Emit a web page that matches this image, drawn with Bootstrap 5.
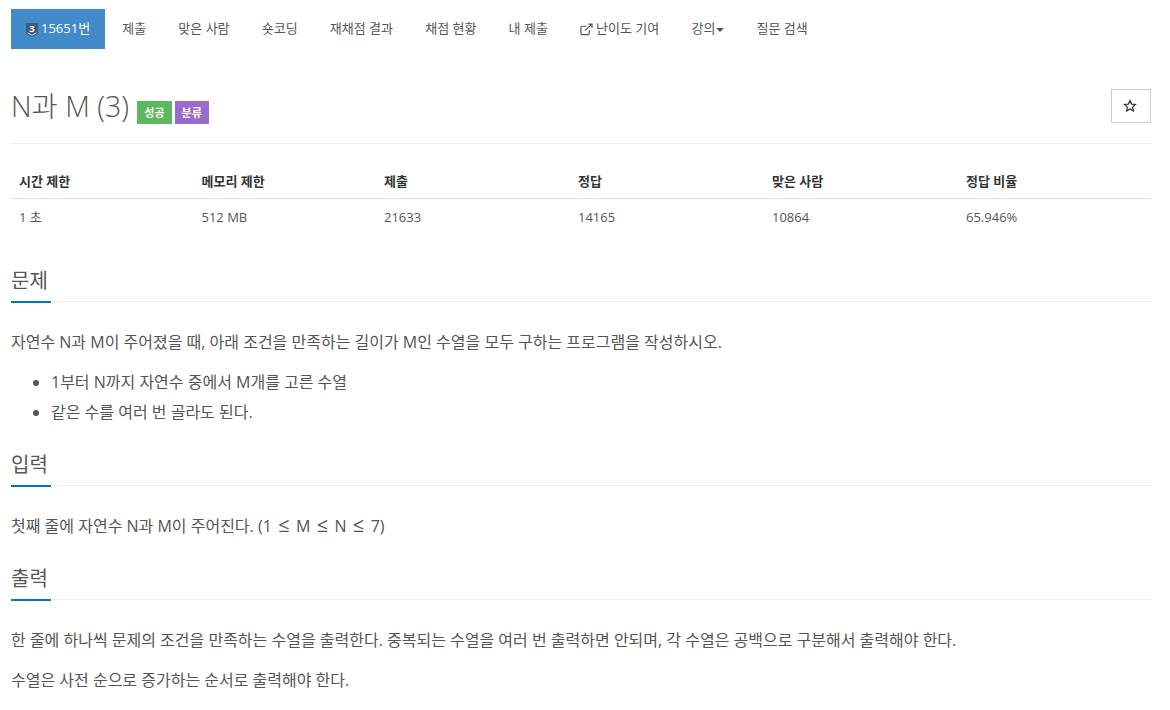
<!DOCTYPE html>
<html lang="ko">
<head>
  <meta charset="UTF-8">
  <meta name="viewport" content="width=device-width, initial-scale=1">
  <title>15651번: N과 M (3)</title>
  <link href="https://cdn.jsdelivr.net/npm/bootstrap@5.3.3/dist/css/bootstrap.min.css" rel="stylesheet">
  <style>
    body { font-family: "Open Sans", "Noto Sans CJK KR", sans-serif; color: #555; font-size: 16px; overflow: hidden; }
    .page-wrap { padding: 9px 19px 0 11px; }
    .tab-bar { height: 40px; }
    .tab-item { display: flex; align-items: center; height: 40px; padding: 0 16.1px; font-size: 13px; color: #555; text-decoration: none; white-space: nowrap; }
    .tab-item.tab-active { background: #428bca; color: #fff; padding: 0 15px; margin-right: 1px; }
    .tab-icon { margin-right: 3px; }
    .tier-icon { margin-top: 2px; }
    .tab-caret { display: inline-block; border-top: 4px solid #555; border-left: 4px solid transparent; border-right: 4px solid transparent; margin-left: 1px; margin-top: 2px; }
    .title-row { height: 95px; border-bottom: 1px solid #eee; }
    .title-text { font-size: 28.500px; font-weight: 300; color: #555; margin: 0; padding-top: 38px; line-height: 38px; }
    .tag { display: inline-block; font-size: 11px; font-weight: 700; color: #fff; height: 23px; line-height: 23px; padding: 0 7px; vertical-align: 0; }
    .tag-green { background: #5cb85c; margin-left: 1px; }
    .tag-purple { background: #9b6bcc; margin-left: 3px; }
    .star-btn { width: 40px; height: 34px; margin-top: 40px; border: 1px solid #ccc; background: #fff; display: flex; align-items: center; justify-content: center; padding: 0 2px 0 0; }
    .stat-table { margin: 18px 0 22px; font-size: 13px; line-height: 19px; table-layout: fixed; }
    .stat-col-a { width: 182.500px; }
    .stat-col-b { width: 194px; }
    .stat-table th { color: #333; border-bottom: 1px solid #ddd; padding: 9px 8px 7px; height: 36px; font-weight: 700; }
    .stat-table td { color: #555; padding: 9px 8px 8px; border: 0; height: 38px; }
    .sect-head { position: relative; border-bottom: 1px dotted #e0e0e0; height: 44px; }
    .sect-head h2 { font-size: 20px; font-weight: 400; color: #555; margin: 0; line-height: 45px; display: inline-block; }
    .sect-head::after { content: ""; position: absolute; left: 0; bottom: -2px; width: 40px; height: 2px; background: #0076c0; }
    .sect-gap { margin-top: 15px; }
    .sect-text { font-size: 16px; margin: 0 0 10px; line-height: 30px; }
    .sect-first { margin-top: 25px; }
    .sect-list { margin: 0; padding-left: 40px; font-size: 16px; line-height: 30px; }
    .math-op { font-size: 20px; line-height: 1; margin: 0 2.200px; }
  </style>
</head>
<body>
  <div class="page-wrap">
    <nav class="tab-bar d-flex">
      <a class="tab-item tab-active" href="#">
        <svg width="12" height="14" viewBox="0 0 12 14" class="tab-icon tier-icon"><path d="M0 0h12v10.500l-6 3.500-6-3.500z" fill="#3f5a78"/><path d="M1.500 9.800l4.500 2.400 4.500-2.400" fill="none" stroke="#dfe7ef" stroke-width="1"/><text x="6" y="8.500" font-size="9.500" font-weight="700" fill="#fff" text-anchor="middle" font-family="Open Sans, sans-serif">3</text></svg>15651번</a>
      <a class="tab-item" href="#">제출</a>
      <a class="tab-item" href="#">맞은 사람</a>
      <a class="tab-item" href="#">숏코딩</a>
      <a class="tab-item" href="#">재채점 결과</a>
      <a class="tab-item" href="#">채점 현황</a>
      <a class="tab-item" href="#">내 제출</a>
      <a class="tab-item" href="#">
        <svg width="13" height="13" viewBox="0 0 14 13" class="tab-icon" fill="none" stroke="#555" stroke-width="1.300"><path d="M10 7.500v3a1.500 1.500 0 0 1-1.500 1.500h-6A1.500 1.500 0 0 1 1 10.500v-6A1.500 1.500 0 0 1 2.500 3H7"/><path d="M5.500 7.500L12.500 1M9 .8h4v4"/></svg>난이도 기여</a>
      <a class="tab-item" href="#">강의<span class="tab-caret"></span></a>
      <a class="tab-item" href="#">질문 검색</a>
    </nav>

    <div class="title-row d-flex justify-content-between">
      <h1 class="title-text">N과 M (3) <span class="tag tag-green">성공</span><span class="tag tag-purple">분류</span></h1>
      <button class="star-btn" type="button">
        <svg width="14" height="14" viewBox="0 0 14 14"><path d="M7 1.500l1.600 3.600 3.900.4-2.900 2.600.8 3.900L7 10l-3.400 2 .8-3.900L1.500 5.500l3.900-.4z" fill="none" stroke="#333" stroke-width="1.200"/></svg>
      </button>
    </div>

    <table class="table stat-table">
      <colgroup><col class="stat-col-a"><col class="stat-col-a"><col class="stat-col-b"><col class="stat-col-b"><col class="stat-col-b"><col></colgroup>
      <thead>
        <tr><th>시간 제한</th><th>메모리 제한</th><th>제출</th><th>정답</th><th>맞은 사람</th><th>정답 비율</th></tr>
      </thead>
      <tbody>
        <tr><td>1 초</td><td>512 MB</td><td>21633</td><td>14165</td><td>10864</td><td>65.946%</td></tr>
      </tbody>
    </table>

    <section>
      <div class="sect-head"><h2>문제</h2></div>
      <p class="sect-text sect-first">자연수 N과 M이 주어졌을 때, 아래 조건을 만족하는 길이가 M인 수열을 모두 구하는 프로그램을 작성하시오.</p>
      <ul class="sect-list">
        <li>1부터 N까지 자연수 중에서 M개를 고른 수열</li>
        <li>같은 수를 여러 번 골라도 된다.</li>
      </ul>
    </section>
    <section class="sect-gap">
      <div class="sect-head"><h2>입력</h2></div>
      <p class="sect-text sect-first">첫째 줄에 자연수 N과 M이 주어진다. (1 <span class="math-op">≤</span> M <span class="math-op">≤</span> N <span class="math-op">≤</span> 7)</p>
    </section>
    <section class="sect-gap">
      <div class="sect-head"><h2>출력</h2></div>
      <p class="sect-text sect-first">한 줄에 하나씩 문제의 조건을 만족하는 수열을 출력한다. 중복되는 수열을 여러 번 출력하면 안되며, 각 수열은 공백으로 구분해서 출력해야 한다.</p>
      <p class="sect-text">수열은 사전 순으로 증가하는 순서로 출력해야 한다.</p>
    </section>
  </div>
  <script src="https://cdn.jsdelivr.net/npm/bootstrap@5.3.3/dist/js/bootstrap.bundle.min.js"></script>
</body>
</html>
